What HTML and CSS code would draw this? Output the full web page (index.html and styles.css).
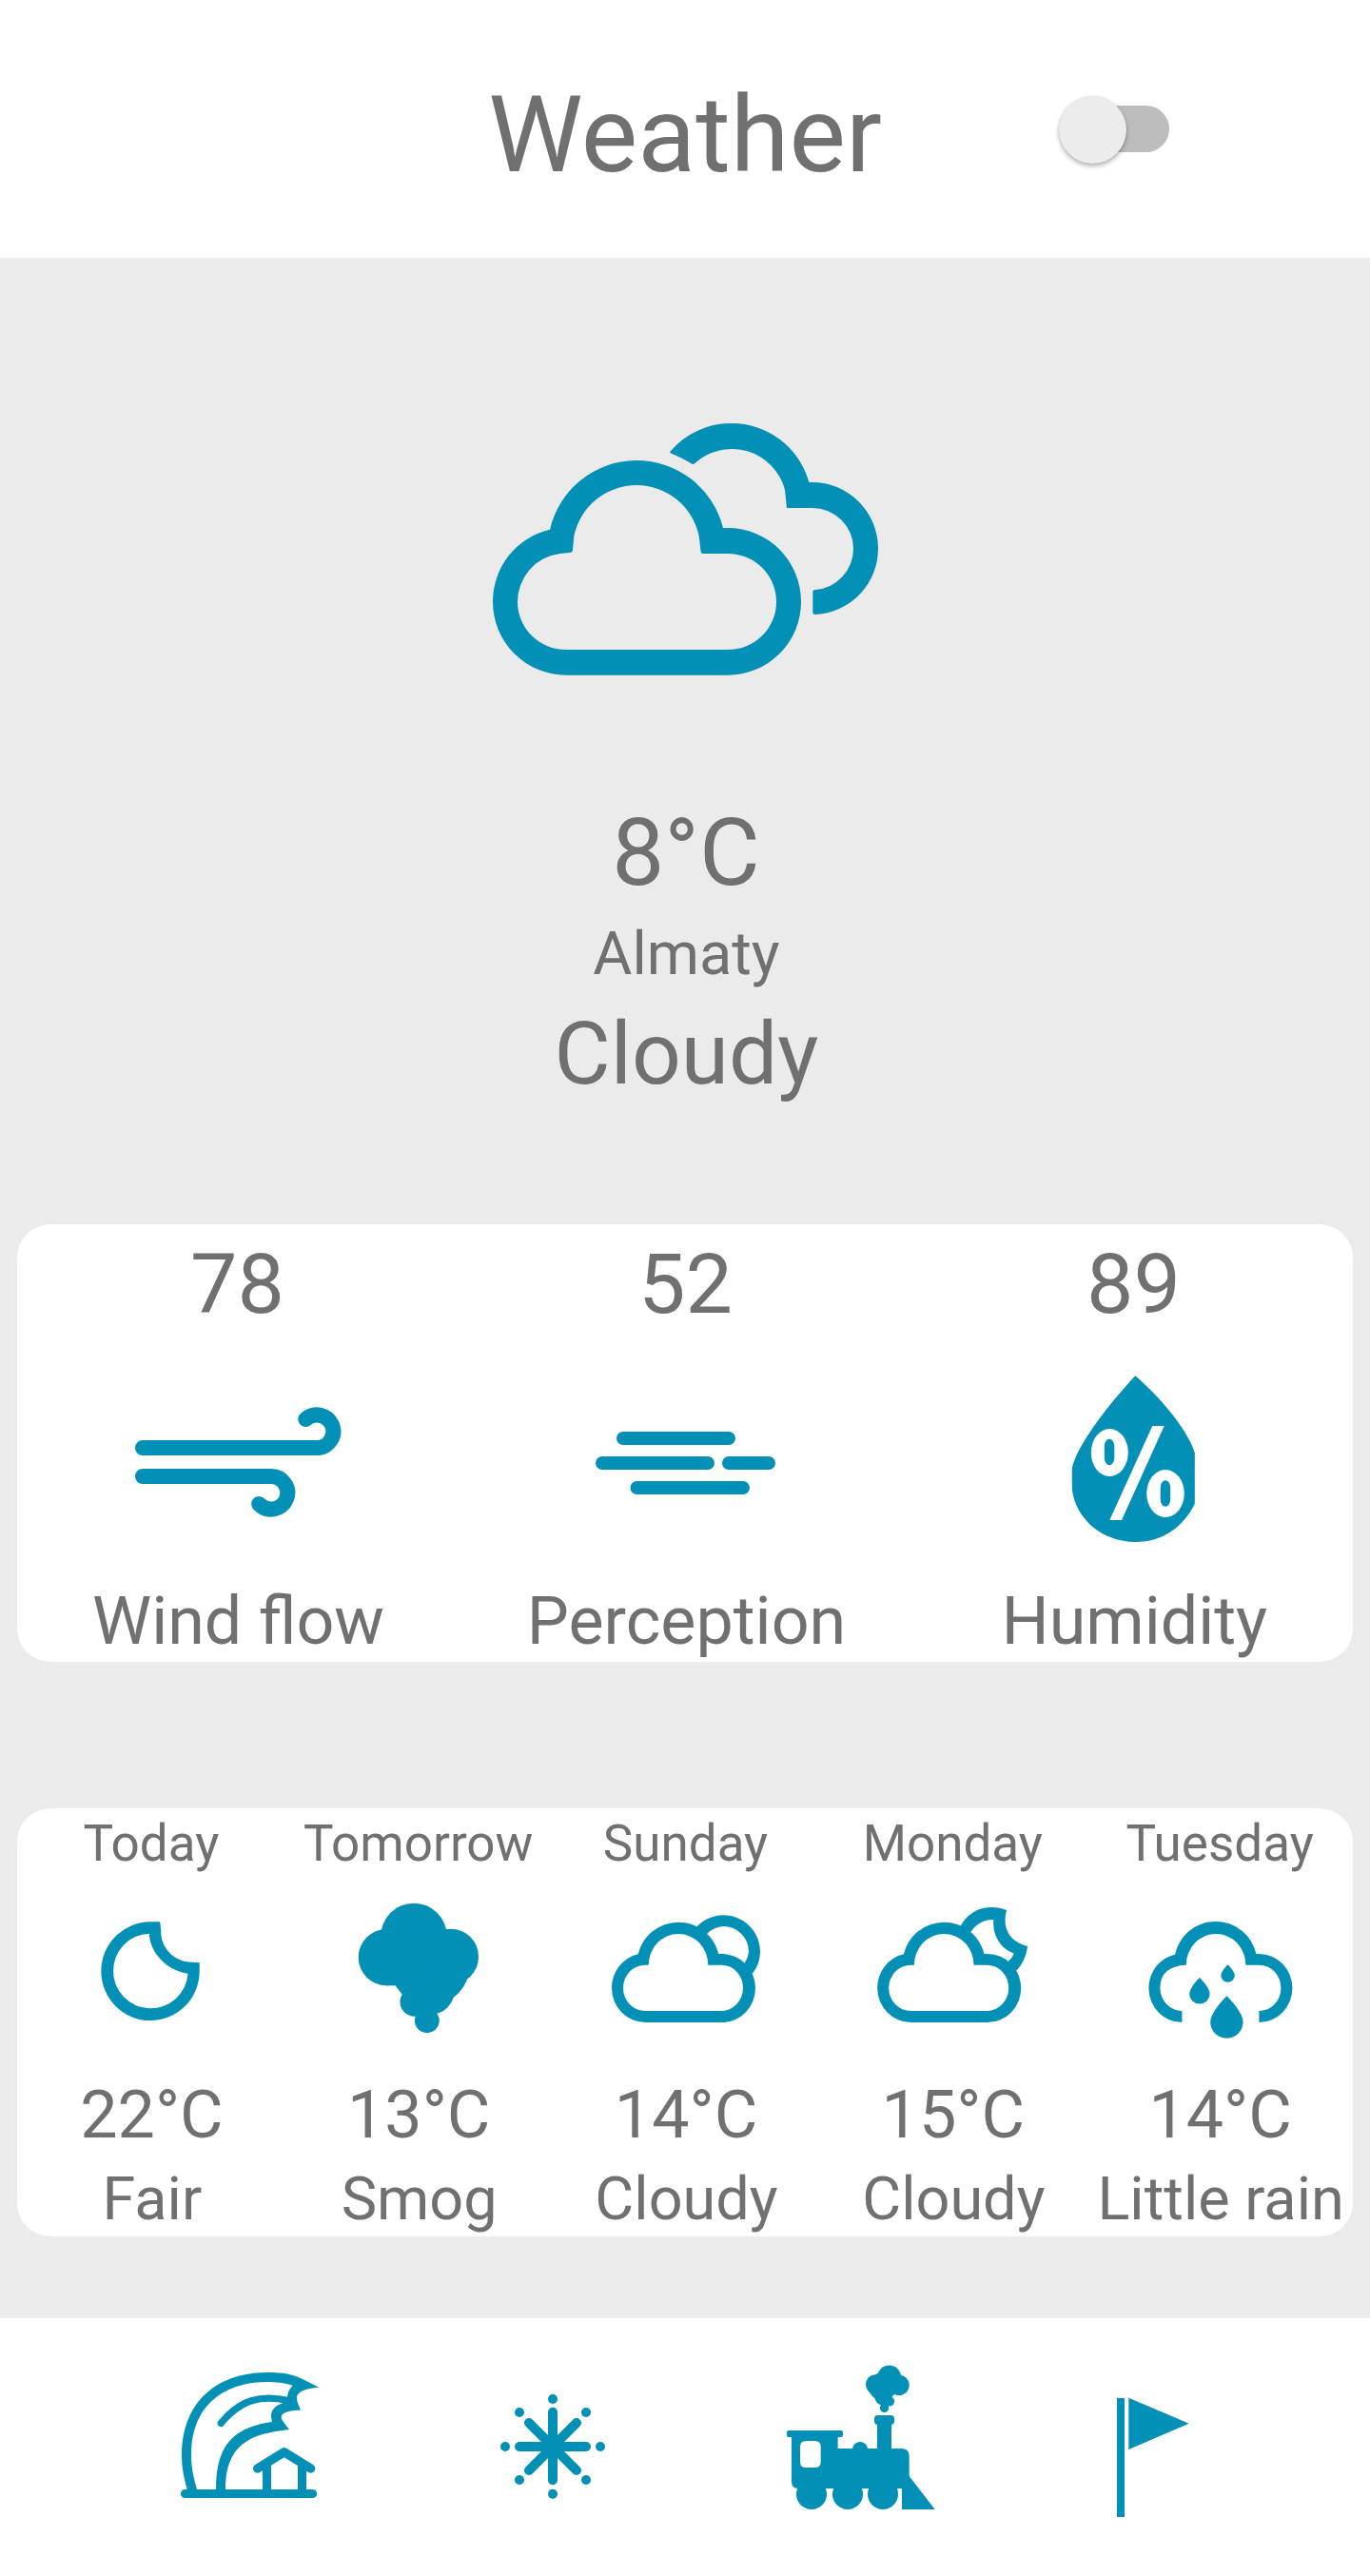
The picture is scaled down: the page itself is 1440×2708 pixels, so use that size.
FILE: index.html
```html
<!DOCTYPE html>
<html lang="en">
<head>
<meta charset="utf-8">
<title>Weather</title>
<link rel="stylesheet" href="styles.css">
</head>
<body>
<svg class="defs" width="0" height="0" aria-hidden="true">
  <symbol id="cloud" overflow="visible">
    <path fill-rule="evenodd" d="M355 738A106 108 0 0 1 249 630A106 108 0 0 1 332 523A130.5 130.5 0 0 1 586 522H597A105 108 0 0 1 702 630A105 108 0 0 1 597 738ZM355 702H595A69 72 0 0 0 663 630A69 72 0 0 0 595 557H553A94 98 0 0 0 365 557H355A70 72 0 0 0 285 630A70 72 0 0 0 355 702Z"/>
  </symbol>
  <symbol id="drop" overflow="visible">
    <path d="M0 -82C-18 -65 -51.5 -25 -51.5 0A51.5 51 0 0 0 51.5 0C51.5 -25 18 -65 0 -82Z"/>
  </symbol>
</svg>

<header class="header">
  <h1 class="title">Weather</h1>
  <div class="switch" role="switch" aria-checked="false"><span class="thumb"></span></div>
</header>

<main class="main">
  <section class="current">
    <svg class="current-icon" viewBox="0 0 1320 960">
      <path fill-rule="evenodd" d="M285 869A231 231 0 0 1 54 638A231 233 0 0 1 234 410A280.700 280.700 0 0 1 780 405H795A231 233 0 0 1 1026 638A231 231 0 0 1 795 869ZM285 789H795A153 151 0 0 0 948 638A153 152 0 0 0 795 486H716Q711 486 710 481L704 430A201.300 201.300 0 0 0 310 430L306 475Q305 481 301 482L265 486A153 153 0 0 0 132 638A153 151 0 0 0 285 789Z"/>
      <path d="M614 169Q611 166 615 162A253 253 0 0 1 807 75A253 253 0 0 1 1051 261H1061A208 209 0 0 1 1269 470A208 208 0 0 1 1073 678Q1063 679 1063 672V606Q1063 600 1070 600A130 130 0 0 0 1191 470A130 128 0 0 0 1061 342H981L975 285A173 173 0 0 0 691 201Q685 206 680 202Q650 184 614 169Z"/>
    </svg>
    <p class="current-temp">8°C</p>
    <p class="city">Almaty</p>
    <p class="current-state">Cloudy</p>
  </section>

  <section class="card details">
    <div class="detail">
      <p class="value">78</p>
      <svg class="detail-icon" viewBox="129 1440 240 190">
        <g class="line" stroke-width="16">
          <path d="M150 1522H334A17.3 17.3 0 1 0 321.3 1492"/>
          <path d="M150 1552H284.7A17.3 17.3 0 1 1 272.2 1581"/>
        </g>
      </svg>
      <p class="label">Wind flow</p>
    </div>
    <div class="detail">
      <p class="value">52</p>
      <svg class="detail-icon" viewBox="600 1440 240 190">
        <path class="line" stroke-width="14" d="M655 1512H766M633 1538H744M766 1538H808M669.500 1564H781"/>
      </svg>
      <p class="label">Perception</p>
    </div>
    <div class="detail">
      <p class="value">89</p>
      <svg class="detail-icon" viewBox="1071 1440 240 190">
        <path d="M1193.400 1446.300C1170 1471 1132 1518 1126.800 1543.300V1565C1130 1596 1158 1621 1193.400 1621C1222 1621 1244 1605 1255.800 1580.700V1527.300C1247 1500 1216 1466 1193.400 1446.300Z"/>
        <g class="paper">
          <ellipse cx="1166.300" cy="1527" rx="19.500" ry="25"/>
          <ellipse cx="1225" cy="1570" rx="19.800" ry="25"/>
          <polygon points="1211.300,1499 1223.700,1499 1179,1598 1166.300,1598"/>
        </g>
        <rect x="1160.800" y="1512.700" width="10.500" height="27.600" rx="5.200" ry="8"/>
        <rect x="1219.700" y="1556.200" width="10.500" height="27.600" rx="5.200" ry="8"/>
      </svg>
      <p class="label">Humidity</p>
    </div>
  </section>

  <section class="card forecast">
    <div class="day">
      <p class="day-name">Today</p>
      <svg class="day-icon" viewBox="58.400 1980 200 180">
        <path fill-rule="evenodd" d="M158.500 2020.300H167.500Q168.700 2020.300 168.900 2022L169.800 2034C171 2049 184 2061 198 2062.500L210.100 2063.300V2072A51.700 51.900 0 1 1 158.500 2020.300ZM157.200 2032.700A39.300 39.300 0 1 0 197.900 2074.700C175 2071.500 158 2052 157.200 2032.700Z"/>
      </svg>
      <p class="day-temp">22°C</p>
      <p class="day-state">Fair</p>
    </div>
    <div class="day">
      <p class="day-name">Tomorrow</p>
      <svg class="day-icon" viewBox="339.200 1980 200 180">
        <circle cx="435.200" cy="2035.300" r="34.600"/>
        <circle cx="474" cy="2057" r="29.200"/>
        <circle cx="406.500" cy="2057.700" r="29.600"/>
        <circle cx="452" cy="2066" r="42"/>
        <rect x="406" y="2070" width="20" height="17.300"/>
        <circle cx="452" cy="2092" r="26"/>
        <circle cx="436" cy="2104.500" r="15.300"/>
        <circle cx="449" cy="2124.200" r="12.900"/>
      </svg>
      <p class="day-temp">13°C</p>
      <p class="day-state">Smog</p>
    </div>
    <div class="day">
      <p class="day-name">Sunday</p>
      <svg class="day-icon" viewBox="180 300 600 540">
        <use href="#cloud"/>
        <path d="M517 436A116 116 0 0 1 717 515A116 116 0 0 1 693 584L680 580L668 551A80 80 0 0 0 681 515A80 80 0 0 0 602 435A80 80 0 0 0 550 458L535 462Z"/>
      </svg>
      <p class="day-temp">14°C</p>
      <p class="day-state">Cloudy</p>
    </div>
    <div class="day">
      <p class="day-name">Monday</p>
      <svg class="day-icon" viewBox="185.400 300 600 540">
        <use href="#cloud"/>
        <path d="M512 434C532 396 568 375 608 375Q634 375 657 385C644 424 652 480 723 498Q716 544 689 574L675 570L662 545Q674 534 680 521C640 505 612 470 615 414Q570 414 544 452L530 458Z"/>
      </svg>
      <p class="day-temp">15°C</p>
      <p class="day-state">Cloudy</p>
    </div>
    <div class="day">
      <p class="day-name">Tuesday</p>
      <svg class="day-icon" viewBox="544.800 300 600 540">
        <path d="M726 738A105 108 0 0 1 621 630A105 108 0 0 1 704 524A131 131 0 0 1 960 522H969A105 108 0 0 1 969 738V702A69 72 0 0 0 1038 630A69 72 0 0 0 969 557H927A94 98 0 0 0 739 557Q657 560 657 630A70 72 0 0 0 726 702Z"/>
        <use href="#drop" transform="translate(867 737)"/>
        <use href="#drop" transform="translate(781.500 648) scale(.62)"/>
        <use href="#drop" transform="translate(870.500 590) scale(.42)"/>
      </svg>
      <p class="day-temp">14°C</p>
      <p class="day-state">Little rain</p>
    </div>
  </section>
</main>

<nav class="tabs">
  <svg class="tab" viewBox="-204 51 954 813">
    <path d="M80 591C68 545 63 520 63 480C63 330 160 222 333 222C410 222 430 235 495 269C460 273 426 279 426 303C426 315 432 325 438 341C410 341 377 345 377 363C377 372 385 380 402 402C290 415 201 440 201 591H171C171 440 235 395 348 378Q345 365 345 358C345 340 360 325 382 319L396 300C397 285 402 275 413 263C390 255 360 252 333 252C180 252 93 340 93 480C93 520 98 545 111 591Z"/>
    <path class="line" stroke-width="22" d="M187 382C250 305 315 292 400 311"/>
    <path class="line" stroke-width="27" d="M73.500 604.500H476"/>
    <path class="line" stroke-width="28" d="M302 525L386 473.500L470 525"/>
    <path class="wall" d="M331.500 508V600M442.500 508V600"/>
  </svg>
  <svg class="tab" viewBox="750 51 954 813">
    <path class="line" stroke-width="30" d="M1233 347V562M1128 456H1338M1158 381L1308 531M1308 381L1158 531"/>
    <g>
      <circle cx="1233" cy="306" r="15"/><circle cx="1233" cy="605" r="15"/>
      <circle cx="1083" cy="456" r="15"/><circle cx="1383" cy="456" r="15"/>
      <circle cx="1128" cy="348" r="15"/><circle cx="1338" cy="348" r="15"/>
      <circle cx="1128" cy="561" r="15"/><circle cx="1338" cy="561" r="15"/>
    </g>
  </svg>
  <svg class="tab" viewBox="-186 51 954 813">
    <rect x="81" y="405" width="177" height="21" rx="6"/>
    <path fill-rule="evenodd" d="M96 415H242V462H445Q467 464 467 486V588H116Q96 586 96 566ZM141 438Q123 438 123 456V504Q123 522 141 522H170Q188 522 188 504V456Q188 438 170 438Z"/>
    <circle cx="312" cy="465" r="24"/>
    <rect x="366" y="375" width="45" height="95"/>
    <rect x="357" y="357" width="63" height="30" rx="11"/>
    <circle cx="159" cy="606" r="48"/>
    <circle cx="273" cy="606" r="48"/>
    <circle cx="384" cy="606" r="48"/>
    <polygon points="444,549 467,549 548,654 444,654"/>
    <circle cx="404" cy="237" r="37.500"/>
    <circle cx="435" cy="262" r="32"/>
    <circle cx="361" cy="260" r="31"/>
    <circle cx="383" cy="267" r="44"/>
    <circle cx="383" cy="301" r="24.500"/>
    <circle cx="405" cy="313" r="15.500"/>
    <circle cx="388.500" cy="334" r="14"/>
  </svg>
  <svg class="tab" viewBox="768 51 954 813">
    <rect x="1122" y="303" width="24" height="375"/>
    <polygon points="1159,302 1349,383 1159,465"/>
  </svg>
</nav>
</body>
</html>
```

FILE: styles.css
```css
* {
  box-sizing: border-box;
}

body {
  margin: 0;
  min-height: 2708px;
  display: flex;
  flex-direction: column;
  background: #ebebeb;
  color: #707070;
  font-family: Roboto, sans-serif;
}

h1,
p {
  margin: 0;
  font-weight: 400;
  white-space: nowrap;
}

svg {
  display: block;
  fill: #0290b7;
}

.defs {
  position: absolute;
}

.line {
  fill: none;
  stroke: #0290b7;
  stroke-linecap: round;
  stroke-linejoin: round;
}

.wall {
  fill: none;
  stroke: #0290b7;
  stroke-width: 27;
}

.paper {
  fill: #fff;
}

/* Header */
.header {
  height: 271px;
  padding-top: 76px;
  display: grid;
  grid-template-columns: 1fr auto 1fr;
  align-items: start;
  background: #fff;
}

.title {
  grid-column: 2;
  font-size: 112px;
  line-height: 132px;
}

.switch {
  justify-self: end;
  width: 110px;
  height: 49px;
  margin: 35px 211px 0 0;
  display: flex;
  align-items: center;
  border-radius: 25px;
  background: #bdbdbd;
}

.thumb {
  flex: none;
  width: 71px;
  height: 71px;
  margin: 2px 0 0 -6px;
  border-radius: 50%;
  background: #ececec;
  box-shadow: 0 3px 5px rgba(0, 0, 0, 0.28), 0 0 2px rgba(0, 0, 0, 0.12);
}

/* Current weather */
.main {
  height: 2166px;
}

.current {
  height: 1016px;
  padding-top: 149px;
  display: flex;
  flex-direction: column;
  align-items: center;
}

.current-icon {
  width: 440px;
  height: 320px;
}

.current-temp {
  margin-top: 100px;
  padding-left: 2px;
  font-size: 98px;
  line-height: 114px;
}

.city {
  margin-top: 12px;
  padding-left: 3px;
  font-size: 63px;
  line-height: 74px;
}

.current-state {
  margin-top: 15px;
  padding-left: 3px;
  font-size: 91px;
  line-height: 106px;
}

/* Cards */
.card {
  display: grid;
  margin: 0 18px;
  border-radius: 35px;
  background: #fff;
}

.details {
  height: 460px;
  padding-top: 11px;
  grid-template-columns: 462px 480px 462px;
}

.detail,
.day {
  display: flex;
  flex-direction: column;
  align-items: center;
}

.value {
  padding-left: 1px;
  font-size: 88px;
  line-height: 104px;
}

.detail-icon {
  width: 240px;
  height: 190px;
  margin: 38px 0 33px;
}

.label {
  padding-left: 3px;
  font-size: 70px;
  line-height: 82px;
}

.forecast {
  height: 450px;
  margin-top: 154px;
  padding-top: 6px;
  grid-template-columns: repeat(5, 1fr);
}

.day-name {
  padding-left: 1px;
  font-size: 53px;
  line-height: 62px;
}

.day-icon {
  width: 200px;
  height: 180px;
  margin: 11px 0 22px;
}

.day-temp {
  padding-left: 2px;
  font-size: 70px;
  line-height: 82px;
}

.day-state {
  margin-top: 11px;
  padding-left: 3px;
  font-size: 63px;
  line-height: 74px;
}

/* Bottom navigation */
.tabs {
  height: 271px;
  padding-left: 102px;
  display: flex;
  background: #fff;
}

.tab {
  width: 318px;
  height: 271px;
}
```
